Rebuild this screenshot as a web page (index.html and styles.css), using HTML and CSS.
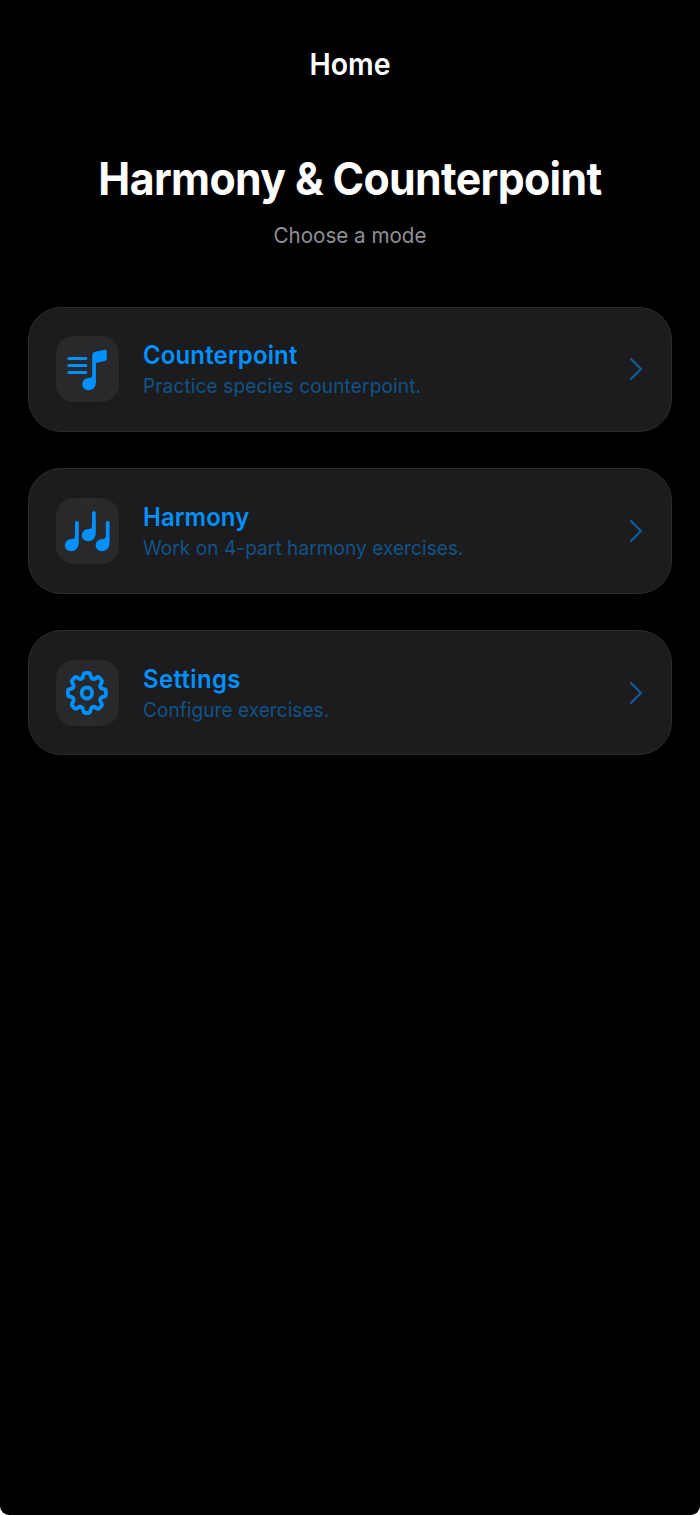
FILE: index.html
```html
<!DOCTYPE html>
<html lang="en">
<head>
<meta charset="utf-8">
<title>Home</title>
<link rel="stylesheet" href="styles.css">
</head>
<body>
<main class="screen">
  <header class="nav">Home</header>
  <section class="intro">
    <h1 class="title">Harmony &amp; Counterpoint</h1>
    <p class="subtitle">Choose a mode</p>
  </section>
  <nav class="modes">
    <a class="card">
      <span class="tile"><svg width="62" height="66" viewBox="0 0 62 66">
        <path class="line" stroke-width="3.2" d="M12.9 22.5H29.8M12.9 29.5H29.8M12.9 36.5H29.8"/>
        <path class="fill" d="M36.2 38V20Q36.2 16.5 39.2 15.8L49 13.8Q50.8 13.5 50.8 15.4V23Q50.8 24.6 49 25L39.9 27V46C39.9 51 37 54.2 32.8 54.2C29 54.2 26.3 51.5 26.3 48.2C26.3 44.8 29 42 32.8 42C35.2 42 36.2 41 36.2 38Z"/>
      </svg></span>
      <span class="copy"><span class="name n1">Counterpoint</span><span class="detail d1">Practice species counterpoint.</span></span>
      <svg class="chevron" width="14" height="24" viewBox="0 0 14 24"><path d="M2 2L12 12L2 22"/></svg>
    </a>
    <a class="card">
      <span class="tile"><svg width="62" height="66" viewBox="0 0 62 66">
        <defs><path id="note" class="fill" d="M10.3 14.5V2.2C10.3-.3 14.1-.3 14.1 2.2V21.5C14.1 27 11 30.5 6.8 30.5C2.8 30.5 .2 28 .2 24.8C.2 21 3 18.2 7 18.2C9.6 18.2 10.3 17 10.3 14.5Z"/></defs>
        <use href="#note" x="8.7" y="22.8"/><use href="#note" x="25.7" y="12.8"/><use href="#note" x="39.5" y="22.8"/>
      </svg></span>
      <span class="copy"><span class="name n2">Harmony</span><span class="detail d2">Work on 4-part harmony exercises.</span></span>
      <svg class="chevron" width="14" height="24" viewBox="0 0 14 24"><path d="M2 2L12 12L2 22"/></svg>
    </a>
    <a class="card">
      <span class="tile"><svg width="62" height="66" viewBox="0 0 62 66">
        <defs><path id="tooth" d="M-5.9-14.2C-4.3-14.8-4-15.6-3.8-17.2Q-3.5-20-1.5-20H1.5Q3.5-20 3.8-17.2C4-15.6 4.3-14.8 5.9-14.2"/></defs>
        <g class="line" stroke-width="4" transform="translate(30.9 32.9) scale(.95 1)">
          <use href="#tooth"/><use href="#tooth" transform="rotate(45)"/><use href="#tooth" transform="rotate(90)"/><use href="#tooth" transform="rotate(135)"/><use href="#tooth" transform="rotate(180)"/><use href="#tooth" transform="rotate(225)"/><use href="#tooth" transform="rotate(270)"/><use href="#tooth" transform="rotate(315)"/>
          <circle r="5.5"/>
        </g>
      </svg></span>
      <span class="copy"><span class="name n3">Settings</span><span class="detail d3">Configure exercises.</span></span>
      <svg class="chevron" width="14" height="24" viewBox="0 0 14 24"><path d="M2 2L12 12L2 22"/></svg>
    </a>
  </nav>
</main>
</body>
</html>
```
FILE: styles.css
```css
* { box-sizing: border-box; }
body { margin: 0; background: #fff; font-family: Inter, "Liberation Sans", sans-serif; }
.screen { height: 1515px; background: #000; border-radius: 0 0 9px 9px; padding: 44px 28px 0; overflow: hidden; }
.nav { height: 40px; line-height: 40px; text-align: center; color: #fff; font-size: 30.5px; font-weight: 600; transform: scaleX(.935); }
.intro { padding-top: 65px; height: 222.6px; text-align: center; }
.title { margin: 0; height: 60px; line-height: 60px; font-size: 45px; font-weight: 700; color: #fff; white-space: nowrap; letter-spacing: -.65px; transform: scaleX(.95); }
.subtitle { margin: 11px 0 0; line-height: 30px; font-size: 21.7px; color: #8e8e93; transform: scaleX(.95); }
.modes { display: flex; flex-direction: column; gap: 36px; }
.card { display: flex; align-items: center; height: 125.6px; padding: 0 28px 0 27px; background: #1c1c1e; border: 1px solid #2c2c2e; border-radius: 33px; }
.tile { width: 62.5px; height: 66px; border-radius: 18px; background: #29292b; flex: none; }
.tile svg { display: block; }
.copy { flex: 1; padding: 0 0 0 24.3px; display: flex; flex-direction: column; align-items: flex-start; }
.name { line-height: 34px; font-size: 25.3px; font-weight: 600; color: #0091ff; transform: scaleX(.945); transform-origin: left; }
.detail { line-height: 28px; font-size: 20.3px; color: #115387; transform: scaleX(.936); transform-origin: left; }
.n1 { letter-spacing: .2px; }
.n2 { letter-spacing: .1px; }
.n3 { letter-spacing: .4px; }
.d1 { letter-spacing: .18px; }
.d2 { letter-spacing: .1px; }
.d3 { letter-spacing: .08px; }
.fill { fill: #0091ff; }
.line { fill: none; stroke: #0091ff; stroke-linecap: round; stroke-linejoin: round; }
.chevron { fill: none; stroke: #115c9b; stroke-width: 2.2; stroke-linecap: round; stroke-linejoin: round; }
```
